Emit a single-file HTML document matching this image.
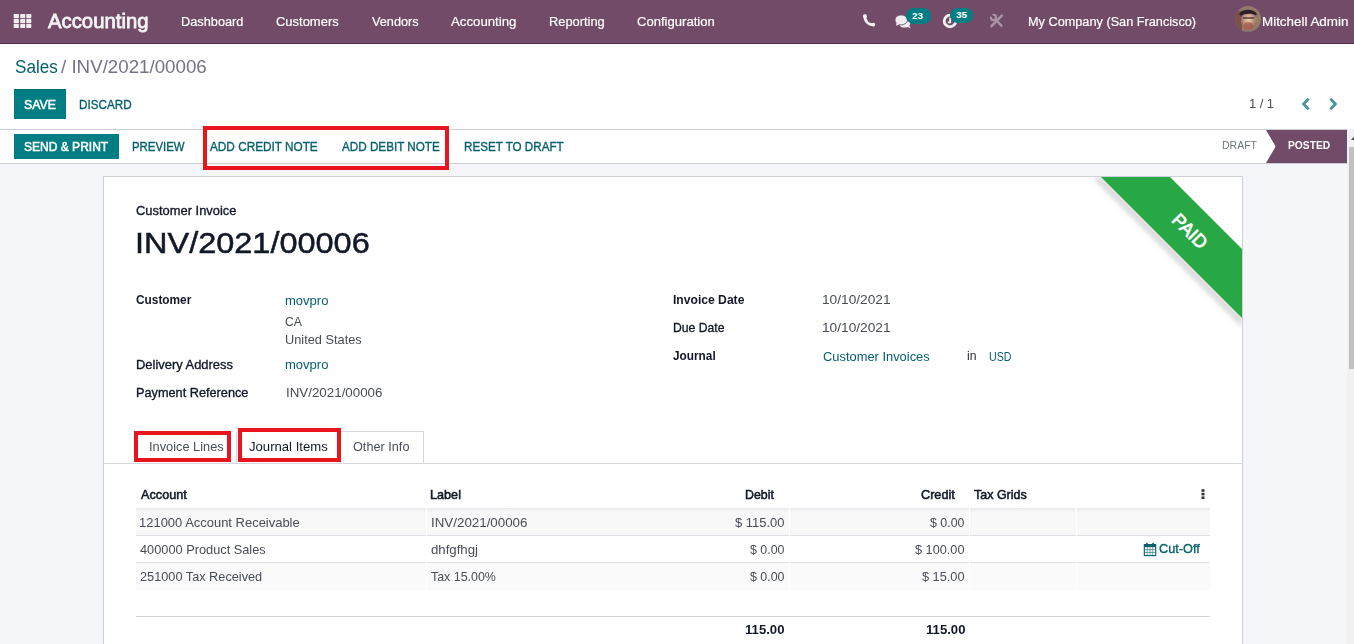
<!DOCTYPE html>
<html><head><meta charset="utf-8">
<style>
*{box-sizing:border-box;margin:0;padding:0}
html,body{width:1354px;height:644px;overflow:hidden;background:#fff;font-family:"Liberation Sans",sans-serif}
.a{position:absolute}
.tx{position:absolute;white-space:nowrap;line-height:1;transform-origin:0 0}
</style></head><body>
<!-- navbar -->
<div class="a" style="left:0;top:0;width:1354px;height:43px;background:#714b67"></div>
<div class="a" style="left:0;top:43px;width:1354px;height:1px;background:#52304a"></div>
<svg class="a" style="left:13px;top:13px" width="20" height="16" viewBox="0 0 20 16">
<g fill="#f0eef0">
<rect x="0.7" y="0.9" width="5.2" height="4.3" rx="0.6"/><rect x="7.2" y="0.9" width="5" height="4.3" rx="0.6"/><rect x="13.3" y="0.9" width="5" height="4.3" rx="0.6"/>
<rect x="0.7" y="5.9" width="5.2" height="4.3" rx="0.6"/><rect x="7.2" y="5.9" width="5" height="4.3" rx="0.6"/><rect x="13.3" y="5.9" width="5" height="4.3" rx="0.6"/>
<rect x="0.7" y="11" width="5.2" height="4.1" rx="0.6"/><rect x="7.2" y="11" width="5" height="4.1" rx="0.6"/><rect x="13.3" y="11" width="5" height="4.1" rx="0.6"/>
</g></svg>
<!-- phone -->
<svg class="a" style="left:858px;top:10px" width="22" height="22" viewBox="0 0 22 22">
<path d="M6.6 6 Q7.2 14.6 15.6 14.8" fill="none" stroke="#f4f2f4" stroke-width="2.9" stroke-linecap="round"/>
<circle cx="7" cy="6.2" r="1.9" fill="#f4f2f4"/><circle cx="15.3" cy="14.6" r="1.9" fill="#f4f2f4"/>
</svg>
<!-- chat -->
<svg class="a" style="left:890px;top:10px" width="24" height="22" viewBox="0 0 24 22">
<ellipse cx="14.6" cy="13.6" rx="5.6" ry="4" fill="#efedef"/>
<path d="M16 16 L20.6 18.4 L18.5 14 Z" fill="#efedef"/>
<ellipse cx="11.2" cy="9.9" rx="6.3" ry="5" fill="#efedef" stroke="#714b67" stroke-width="0.9"/>
<path d="M6.8 12.6 L5.8 15.8 L9.8 14.2 Z" fill="#efedef"/>
</svg>
<div class="a" style="left:906px;top:8px;width:25px;height:16px;border-radius:8px;background:#017e84"></div>
<span class="a" style="left:912px;top:11.2px;font-size:9.8px;line-height:1;font-weight:700;color:#fff;letter-spacing:0px">23</span>
<!-- clock -->
<svg class="a" style="left:940px;top:11px" width="20" height="20" viewBox="0 0 20 20">
<circle cx="10" cy="10" r="5.8" fill="none" stroke="#f4f2f4" stroke-width="2.8"/>
<path d="M10.2 6.5 V11.4 H7.8" fill="none" stroke="#f4f2f4" stroke-width="1.8"/>
</svg>
<div class="a" style="left:950px;top:8px;width:23px;height:15px;border-radius:7.5px;background:#017e84"></div>
<span class="a" style="left:956px;top:10.4px;font-size:9.9px;line-height:1;font-weight:700;color:#fff">35</span>
<!-- tools -->
<svg class="a" style="left:986px;top:11px" width="22" height="20" viewBox="0 0 22 20">
<g stroke="#ab93a6" fill="none" stroke-linecap="round">
<path d="M15.8 4.6 L5.4 15.2" stroke-width="2.6"/>
<path d="M9.2 8.4 L15.4 14.6" stroke-width="2.5"/>
<path d="M4.9 6.6 A2.6 2.6 0 1 0 7.6 3.9" stroke-width="2.1"/>
</g></svg>
<!-- avatar -->
<svg class="a" style="left:1234px;top:5px" width="28" height="28" viewBox="0 0 28 28">
<defs><clipPath id="avc"><circle cx="14" cy="14" r="13"/></clipPath>
<radialGradient id="avf" cx="0.5" cy="0.42" r="0.5"><stop offset="0" stop-color="#e6cdb8"/><stop offset="0.6" stop-color="#c69a80"/><stop offset="1" stop-color="#9a7060"/></radialGradient></defs>
<g clip-path="url(#avc)">
<rect width="28" height="28" fill="#94786a"/>
<rect x="0" y="6" width="8" height="22" fill="#7a5048"/>
<ellipse cx="14.5" cy="16" rx="7.5" ry="10" fill="url(#avf)"/>
<path d="M5 9 C8 4 19 3 23 9 L22 10.5 C19 8 10 8 7 11 Z" fill="#2a2026"/>
<path d="M9 13 H20" stroke="#5a3a36" stroke-width="1.4"/>
<ellipse cx="14.5" cy="20.5" rx="4.5" ry="3.2" fill="#9a4a3c" opacity="0.6"/>
<path d="M10 28 C11 25.5 18 25.5 20 28Z" fill="#5d6e94"/>
<g fill="#86b840" opacity="0.7"><rect x="21" y="13" width="1.3" height="1.3"/><rect x="23" y="13" width="1.3" height="1.3"/><rect x="21" y="15.6" width="1.3" height="1.3"/><rect x="23" y="15.6" width="1.3" height="1.3"/></g>
</g>
</svg>

<!-- control panel -->
<div class="a" style="left:14px;top:89px;width:52px;height:30px;background:#017e84;border-top:1px solid #016b70"></div>
<svg class="a" style="left:1300px;top:97px" width="40" height="14" viewBox="0 0 40 14">
<path d="M8.6 1.6 L3.6 7 L8.6 12.4" fill="none" stroke="#46949c" stroke-width="2.8"/>
<path d="M30.4 1.6 L35.4 7 L30.4 12.4" fill="none" stroke="#46949c" stroke-width="2.8"/>
</svg>
<!-- statusbar -->
<div class="a" style="left:0;top:129px;width:1347px;height:1px;background:#cbced5"></div>
<div class="a" style="left:0;top:163px;width:1347px;height:1px;background:#cbced5"></div>
<div class="a" style="left:0;top:164px;width:1347px;height:480px;background:#f5f6f9"></div>
<div class="a" style="left:14px;top:134px;width:105px;height:25px;background:#017e84"></div>
<svg class="a" style="left:1260px;top:130px" width="87" height="33" viewBox="0 0 87 33">
<path d="M6 0 H87 V33 H6 L15.6 16.5 Z" fill="#714b67"/>
</svg>
<!-- scrollbar -->
<div class="a" style="left:1347px;top:129px;width:7px;height:515px;background:#f1f1f1"></div>
<div class="a" style="left:1349px;top:147px;width:5px;height:222px;background:#c1c1c1"></div>
<svg class="a" style="left:1350px;top:134px" width="4" height="8" viewBox="0 0 4 8"><path d="M1 6 L4 2.5 L7 6Z" fill="#505050"/></svg>

<!-- sheet -->
<div class="a" style="left:103px;top:176px;width:1140px;height:480px;background:#fff;border:1px solid #cdd0d6"></div>
<!-- ribbon -->
<svg class="a" style="left:1080px;top:177px" width="162" height="160" viewBox="0 0 162 160">
<defs><filter id="sh" x="-20%" y="-20%" width="140%" height="140%"><feGaussianBlur stdDeviation="2.6"/></filter></defs>
<path d="M21 0 L162 141 L162 150 L13 1 Z" fill="rgba(0,0,0,0.16)" filter="url(#sh)"/>
<path d="M21 0 H90 L162 72 V141 Z" fill="#28a745"/>
<text x="0" y="0" transform="translate(110 54) rotate(45)" text-anchor="middle" font-family="Liberation Sans" font-size="18.3" fill="#fff" stroke="#fff" stroke-width="0.75" dy="6.5">PAID</text>
</svg>
<!-- tabs -->
<div class="a" style="left:104px;top:463px;width:1138px;height:1px;background:#d3d6dc"></div>
<div class="a" style="left:236px;top:431px;width:1px;height:32px;background:#d3d6dc"></div>
<div class="a" style="left:340px;top:431px;width:84px;height:32px;background:#fff;border:1px solid #d3d6dc;border-bottom:none"></div>
<!-- table -->
<div class="a" style="left:136px;top:508px;width:1074px;height:27px;background:#f8f8f9"></div>
<div class="a" style="left:136px;top:508px;width:1074px;height:4px;background:linear-gradient(#e8e9ec,rgba(248,248,249,0))"></div>
<div class="a" style="left:136px;top:535px;width:1074px;height:1px;background:#dde0e4"></div>
<div class="a" style="left:136px;top:562px;width:1074px;height:1px;background:#dde0e4"></div>
<div class="a" style="left:136px;top:563px;width:1074px;height:27px;background:#fafafb"></div>
<div class="a" style="left:426px;top:508px;width:1px;height:82px;background:#fff"></div>
<div class="a" style="left:789px;top:508px;width:1px;height:82px;background:#fff"></div>
<div class="a" style="left:969px;top:508px;width:1px;height:82px;background:#fff"></div>
<div class="a" style="left:1076px;top:508px;width:1px;height:82px;background:#fff"></div>
<div class="a" style="left:136px;top:616px;width:1074px;height:1px;background:#cfd2d8"></div>
<svg class="a" style="left:1200px;top:488px" width="6" height="12" viewBox="0 0 6 12"><g fill="#333"><rect x="1.5" y="1.2" width="3" height="2.6"/><rect x="1.5" y="4.8" width="3" height="2.6"/><rect x="1.5" y="8.4" width="3" height="2.6"/></g></svg>
<svg class="a" style="left:1143px;top:542px" width="14" height="15" viewBox="0 0 14 15">
<rect x="1.3" y="2.6" width="11.4" height="11" fill="none" stroke="#05606c" stroke-width="1.1"/>
<rect x="1" y="2.5" width="12" height="2.6" fill="#05606c"/>
<path d="M1.5 7.6 H12.5 M1.5 10.4 H12.5 M4.2 5 V13.5 M7 5 V13.5 M9.8 5 V13.5" fill="none" stroke="#05606c" stroke-width="0.55"/>
<rect x="3.2" y="0.9" width="1.6" height="2.6" fill="#05606c"/><rect x="9.2" y="0.9" width="1.6" height="2.6" fill="#05606c"/>
</svg>

<span id="brand" class="tx" style="left:48.00px;top:10.56px;font-size:20.60px;font-weight:400;color:#f4f4f4;transform:scaleX(0.9863);-webkit-text-stroke:0.80px #f4f4f4;">Accounting</span>
<span id="m1" class="tx" style="left:181.10px;top:14.70px;font-size:13.70px;font-weight:400;color:#ffffff;transform:scaleX(0.9321);-webkit-text-stroke:0.2px #fff;">Dashboard</span>
<span id="m2" class="tx" style="left:276.00px;top:14.70px;font-size:13.70px;font-weight:400;color:#ffffff;transform:scaleX(0.9473);-webkit-text-stroke:0.2px #fff;">Customers</span>
<span id="m3" class="tx" style="left:372.00px;top:14.70px;font-size:13.70px;font-weight:400;color:#ffffff;transform:scaleX(0.9274);-webkit-text-stroke:0.2px #fff;">Vendors</span>
<span id="m4" class="tx" style="left:451.00px;top:14.70px;font-size:13.70px;font-weight:400;color:#ffffff;transform:scaleX(0.9655);-webkit-text-stroke:0.2px #fff;">Accounting</span>
<span id="m5" class="tx" style="left:549.09px;top:14.70px;font-size:13.70px;font-weight:400;color:#ffffff;transform:scaleX(0.9396);-webkit-text-stroke:0.2px #fff;">Reporting</span>
<span id="m6" class="tx" style="left:637.00px;top:14.70px;font-size:13.70px;font-weight:400;color:#ffffff;transform:scaleX(0.9548);-webkit-text-stroke:0.2px #fff;">Configuration</span>
<span id="company" class="tx" style="left:1028.11px;top:14.70px;font-size:13.70px;font-weight:400;color:#ffffff;transform:scaleX(0.9285);-webkit-text-stroke:0.2px #fff;">My Company (San Francisco)</span>
<span id="user" class="tx" style="left:1262.07px;top:14.70px;font-size:13.70px;font-weight:400;color:#ffffff;transform:scaleX(0.9789);-webkit-text-stroke:0.2px #fff;">Mitchell Admin</span>
<span id="bc1" class="tx" style="left:15.00px;top:59.20px;font-size:17.60px;font-weight:400;color:#05606c;transform:scaleX(0.9730);">Sales</span>
<span id="bc2" class="tx" style="left:61.00px;top:59.20px;font-size:17.60px;font-weight:400;color:#75718a;transform:scaleX(1.0646);">/ INV/2021/00006</span>
<span id="save" class="tx" style="left:24.00px;top:97.96px;font-size:13.40px;font-weight:400;color:#ffffff;transform:scaleX(0.9195);-webkit-text-stroke:0.55px #ffffff;">SAVE</span>
<span id="discard" class="tx" style="left:79.11px;top:97.96px;font-size:13.40px;font-weight:400;color:#05606c;transform:scaleX(0.8731);-webkit-text-stroke:0.35px #05606c;">DISCARD</span>
<span id="pager" class="tx" style="left:1249.08px;top:96.97px;font-size:13.50px;font-weight:400;color:#4c4c58;transform:scaleX(0.9528);">1 / 1</span>
<span id="send" class="tx" style="left:24.00px;top:139.86px;font-size:13.40px;font-weight:400;color:#ffffff;transform:scaleX(0.8981);-webkit-text-stroke:0.55px #ffffff;">SEND &amp; PRINT</span>
<span id="preview" class="tx" style="left:132.13px;top:139.86px;font-size:13.40px;font-weight:400;color:#05606c;transform:scaleX(0.8512);-webkit-text-stroke:0.35px #05606c;">PREVIEW</span>
<span id="acn" class="tx" style="left:210.00px;top:139.86px;font-size:13.40px;font-weight:400;color:#05606c;transform:scaleX(0.8793);-webkit-text-stroke:0.35px #05606c;">ADD CREDIT NOTE</span>
<span id="adn" class="tx" style="left:342.00px;top:139.86px;font-size:13.40px;font-weight:400;color:#05606c;transform:scaleX(0.8724);-webkit-text-stroke:0.35px #05606c;">ADD DEBIT NOTE</span>
<span id="rtd" class="tx" style="left:464.12px;top:139.86px;font-size:13.40px;font-weight:400;color:#05606c;transform:scaleX(0.8696);-webkit-text-stroke:0.35px #05606c;">RESET TO DRAFT</span>
<span id="draft" class="tx" style="left:1222.00px;top:140.15px;font-size:11.40px;font-weight:400;color:#6c757d;transform:scaleX(0.9213);">DRAFT</span>
<span id="posted" class="tx" style="left:1288.00px;top:140.15px;font-size:11.40px;font-weight:700;color:#ffffff;transform:scaleX(0.9011);">POSTED</span>
<span id="ci" class="tx" style="left:136.00px;top:203.86px;font-size:13.40px;font-weight:400;color:#111827;transform:scaleX(0.9641);-webkit-text-stroke:0.35px #111827;">Customer Invoice</span>
<span id="title" class="tx" style="left:134.80px;top:227.54px;font-size:29.60px;font-weight:400;color:#111827;transform:scaleX(1.0973);-webkit-text-stroke:0.5px #111827;">INV/2021/00006</span>
<span id="l_cust" class="tx" style="left:136.00px;top:292.96px;font-size:13.40px;font-weight:700;color:#111827;transform:scaleX(0.8852);">Customer</span>
<span id="v_movpro" class="tx" style="left:285.00px;top:293.66px;font-size:13.40px;font-weight:400;color:#05606c;transform:scaleX(0.9733);">movpro</span>
<span id="v_ca" class="tx" style="left:285.00px;top:314.56px;font-size:13.40px;font-weight:400;color:#484c58;transform:scaleX(0.9142);">CA</span>
<span id="v_us" class="tx" style="left:285.03px;top:333.46px;font-size:13.40px;font-weight:400;color:#484c58;transform:scaleX(0.9538);">United States</span>
<span id="l_del" class="tx" style="left:136.03px;top:357.76px;font-size:13.40px;font-weight:400;color:#111827;transform:scaleX(0.9651);-webkit-text-stroke:0.35px #111827;">Delivery Address</span>
<span id="v_movpro2" class="tx" style="left:285.00px;top:358.36px;font-size:13.40px;font-weight:400;color:#05606c;transform:scaleX(0.9733);">movpro</span>
<span id="l_pay" class="tx" style="left:136.04px;top:385.66px;font-size:13.40px;font-weight:400;color:#111827;transform:scaleX(0.9497);-webkit-text-stroke:0.35px #111827;">Payment Reference</span>
<span id="v_pay" class="tx" style="left:285.99px;top:385.66px;font-size:13.40px;font-weight:400;color:#484c58;transform:scaleX(0.9965);">INV/2021/00006</span>
<span id="l_idate" class="tx" style="left:673.00px;top:292.76px;font-size:13.40px;font-weight:700;color:#111827;transform:scaleX(0.9050);">Invoice Date</span>
<span id="v_idate" class="tx" style="left:821.97px;top:292.66px;font-size:13.40px;font-weight:400;color:#484c58;transform:scaleX(1.0221);">10/10/2021</span>
<span id="l_ddate" class="tx" style="left:673.06px;top:320.96px;font-size:13.40px;font-weight:400;color:#111827;transform:scaleX(0.9086);-webkit-text-stroke:0.35px #111827;">Due Date</span>
<span id="v_ddate" class="tx" style="left:821.97px;top:320.96px;font-size:13.40px;font-weight:400;color:#484c58;transform:scaleX(1.0221);">10/10/2021</span>
<span id="l_jour" class="tx" style="left:673.00px;top:349.46px;font-size:13.40px;font-weight:700;color:#111827;transform:scaleX(0.8820);">Journal</span>
<span id="v_jour" class="tx" style="left:823.00px;top:349.96px;font-size:13.40px;font-weight:400;color:#05606c;transform:scaleX(0.9623);">Customer Invoices</span>
<span id="v_in" class="tx" style="left:967.00px;top:348.96px;font-size:13.40px;font-weight:400;color:#2a2a35;transform:scaleX(0.9105);">in</span>
<span id="v_usd" class="tx" style="left:989.16px;top:349.96px;font-size:13.40px;font-weight:400;color:#05606c;transform:scaleX(0.7996);">USD</span>
<span id="tab1" class="tx" style="left:149.04px;top:440.36px;font-size:13.40px;font-weight:400;color:#4a4e5c;transform:scaleX(0.9553);">Invoice Lines</span>
<span id="tab2" class="tx" style="left:249.00px;top:440.36px;font-size:13.40px;font-weight:400;color:#111827;transform:scaleX(0.9792);">Journal Items</span>
<span id="tab3" class="tx" style="left:353.00px;top:440.36px;font-size:13.40px;font-weight:400;color:#4a4e5c;transform:scaleX(0.9478);">Other Info</span>
<span id="h_acc" class="tx" style="left:141.00px;top:488.46px;font-size:13.40px;font-weight:400;color:#111827;transform:scaleX(0.9466);-webkit-text-stroke:0.55px #111827;">Account</span>
<span id="h_lab" class="tx" style="left:430.02px;top:488.46px;font-size:13.40px;font-weight:400;color:#111827;transform:scaleX(0.9447);-webkit-text-stroke:0.55px #111827;">Label</span>
<span id="h_deb" class="tx" style="left:745.02px;top:488.46px;font-size:13.40px;font-weight:400;color:#111827;transform:scaleX(0.9215);-webkit-text-stroke:0.55px #111827;">Debit</span>
<span id="h_cre" class="tx" style="left:921.00px;top:488.46px;font-size:13.40px;font-weight:400;color:#111827;transform:scaleX(0.9454);-webkit-text-stroke:0.55px #111827;">Credit</span>
<span id="h_tax" class="tx" style="left:974.00px;top:488.46px;font-size:13.40px;font-weight:400;color:#111827;transform:scaleX(0.9324);-webkit-text-stroke:0.55px #111827;">Tax Grids</span>
<span id="r0a" class="tx" style="left:139.03px;top:515.76px;font-size:13.40px;font-weight:400;color:#484c58;transform:scaleX(0.9680);">121000 Account Receivable</span>
<span id="r0l" class="tx" style="left:430.99px;top:515.76px;font-size:13.40px;font-weight:400;color:#484c58;transform:scaleX(0.9967);">INV/2021/00006</span>
<span id="r0d" class="tx" style="left:735.00px;top:515.76px;font-size:13.40px;font-weight:400;color:#484c58;transform:scaleX(0.9672);">$ 115.00</span>
<span id="r0c" class="tx" style="left:930.00px;top:515.76px;font-size:13.40px;font-weight:400;color:#484c58;transform:scaleX(0.9251);">$ 0.00</span>
<span id="r1a" class="tx" style="left:140.00px;top:542.76px;font-size:13.40px;font-weight:400;color:#484c58;transform:scaleX(0.9537);">400000 Product Sales</span>
<span id="r1l" class="tx" style="left:431.00px;top:542.76px;font-size:13.40px;font-weight:400;color:#484c58;transform:scaleX(0.9862);">dhfgfhgj</span>
<span id="r1d" class="tx" style="left:750.00px;top:542.76px;font-size:13.40px;font-weight:400;color:#484c58;transform:scaleX(0.9251);">$ 0.00</span>
<span id="r1c" class="tx" style="left:915.00px;top:542.76px;font-size:13.40px;font-weight:400;color:#484c58;transform:scaleX(0.9486);">$ 100.00</span>
<span id="r2a" class="tx" style="left:140.00px;top:569.66px;font-size:13.40px;font-weight:400;color:#484c58;transform:scaleX(0.9504);">251000 Tax Received</span>
<span id="r2l" class="tx" style="left:431.00px;top:569.66px;font-size:13.40px;font-weight:400;color:#484c58;transform:scaleX(0.9276);">Tax 15.00%</span>
<span id="r2d" class="tx" style="left:750.00px;top:569.66px;font-size:13.40px;font-weight:400;color:#484c58;transform:scaleX(0.9251);">$ 0.00</span>
<span id="r2c" class="tx" style="left:922.00px;top:569.66px;font-size:13.40px;font-weight:400;color:#484c58;transform:scaleX(0.9502);">$ 15.00</span>
<span id="cutoff" class="tx" style="left:1159.00px;top:542.16px;font-size:13.40px;font-weight:400;color:#05606c;transform:scaleX(0.9500);-webkit-text-stroke:0.35px #05606c;">Cut-Off</span>
<span id="tot1" class="tx" style="left:745.00px;top:622.96px;font-size:13.40px;font-weight:700;color:#111827;transform:scaleX(0.9814);">115.00</span>
<span id="tot2" class="tx" style="left:926.00px;top:622.96px;font-size:13.40px;font-weight:700;color:#111827;transform:scaleX(0.9813);">115.00</span>


<!-- red annotation boxes -->
<div class="a" style="left:203px;top:126px;width:246px;height:44px;border:4.5px solid #e8141e"></div>
<div class="a" style="left:134px;top:431px;width:97px;height:31px;border:4.5px solid #e8141e"></div>
<div class="a" style="left:238px;top:428px;width:103px;height:34px;border:4.5px solid #e8141e"></div>
</body></html>
